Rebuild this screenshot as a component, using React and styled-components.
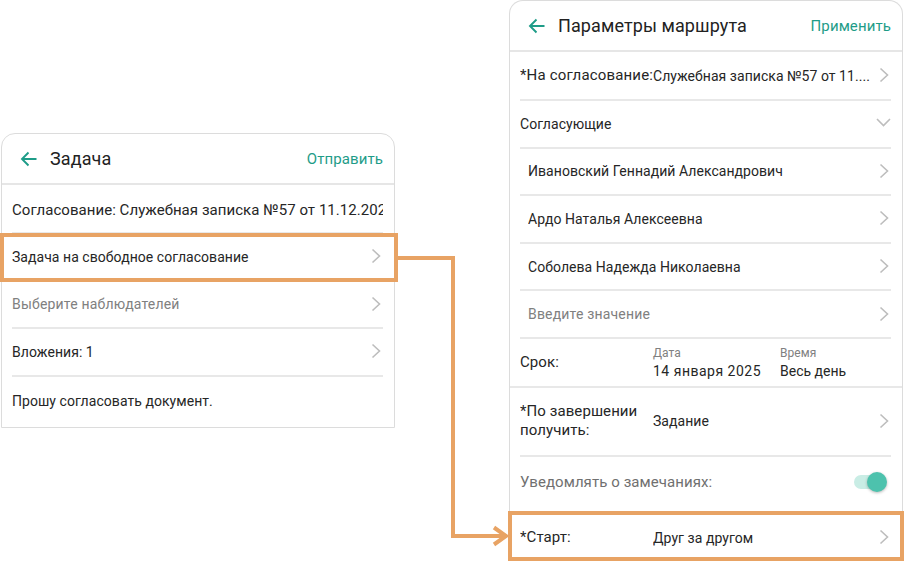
import React from "react";
import styled, { createGlobalStyle } from "styled-components";

const Global = createGlobalStyle`
  html, body { margin: 0; padding: 0; background: #fff; }
  body { font-family: Roboto, "Noto Sans", sans-serif; color: #222; }
  #root { width: 904px; height: 561px; overflow: hidden; }
`;

const Page = styled.div`
  position: relative;
  width: 904px;
  height: 561px;
  overflow: hidden;
  display: flex;
  justify-content: space-between;
  align-items: flex-start;
  padding: 0 1px;
  box-sizing: border-box;
`;

const Phone = styled.section`
  width: 394px;
  height: ${(p) => p.$height}px;
  margin-top: ${(p) => p.$top}px;
  box-sizing: border-box;
  border: 1px solid #dcdcdc;
  border-bottom-width: ${(p) => (p.$open ? 0 : 1)}px;
  border-radius: 14px 14px 0 0;
  background: #fff;
  flex: none;
  overflow: hidden;
  display: flex;
  flex-direction: column;
`;

const Header = styled.header`
  height: 49px;
  flex: none;
  display: flex;
  align-items: center;
  padding: 0 11px 0 18px;
  border-bottom: 2px solid #e6e6e6;
`;

const Back = styled.svg`
  width: 18px;
  height: 18px;
  flex: none;
  margin-right: 12px;
  fill: none;
  stroke: #1e9c88;
  stroke-width: 1.9;
`;

const Title = styled.h1`
  flex: 1;
  margin: 0;
  font-size: 18px;
  font-weight: 400;
  color: #222;
  letter-spacing: 0.1px;
`;

const Action = styled.span`
  font-size: 15px;
  color: #1e9c88;
  letter-spacing: 0.1px;
`;

const Row = styled.div`
  height: ${(p) => p.$h || 47.6}px;
  box-sizing: border-box;
  flex: none;
  margin: 0 11px 0 10px;
  padding-left: ${(p) => (p.$indent ? 8 : 0)}px;
  padding-top: ${(p) => p.$pt || 0}px;
  display: flex;
  align-items: center;
  font-size: ${(p) => p.$size || 14}px;
  letter-spacing: ${(p) => (p.$muted ? 0.18 : 0.05)}px;
  color: ${(p) => (p.$muted ? "#808080" : "#262626")};
  border-bottom: ${(p) => (p.$plain ? 0 : "2px solid #e8e8e8")};
  white-space: nowrap;
  overflow: hidden;
`;

const DateRow = styled(Row)`
  margin: 0;
  padding-left: 10px;
`;

const Label = styled.span`
  flex: 1;
  min-width: 0;
  overflow: hidden;
`;

const FieldName = styled.span`
  width: 133px;
  flex: none;
  white-space: ${(p) => (p.$single ? "nowrap" : "normal")};
  line-height: 19px;
  font-size: 15px;
  letter-spacing: ${(p) => (p.$single ? 0.16 : 0.08)}px;
`;

const Arrow = styled.svg`
  width: ${(p) => p.$w || 14}px;
  height: 18px;
  flex: none;
  margin-top: -1px;
  fill: none;
  stroke: #bdbdbd;
  stroke-width: 1.6;
`;

const DateCell = styled.div`
  width: ${(p) => p.$w}px;
  flex: none;
  display: flex;
  flex-direction: column;
  gap: 2px;
  margin-top: -1px;
  font-size: 14px;
  letter-spacing: ${(p) => p.$ls}px;
`;

const Small = styled.span`
  font-size: 12px;
  line-height: 16px;
  letter-spacing: 0.05px;
  color: #808080;
`;

const Notice = styled(Label)`
  font-size: 15px;
  letter-spacing: 0.07px;
  color: #707070;
`;

const Toggle = styled.span`
  position: relative;
  width: 30px;
  height: 14px;
  flex: none;
  margin-right: 7px;
  border-radius: 7px;
  background: #c9ede5;
  &::after {
    content: "";
    position: absolute;
    right: -3px;
    top: -3px;
    width: 20px;
    height: 20px;
    border-radius: 50%;
    background: #4dc2ad;
    box-shadow: 0 1px 3px rgba(0, 0, 0, 0.28);
  }
`;

const Highlight = styled.div`
  position: absolute;
  box-sizing: border-box;
  left: ${(p) => p.$x}px;
  top: ${(p) => p.$y}px;
  width: ${(p) => p.$w}px;
  height: ${(p) => p.$h}px;
  border: 4px solid #e8a364;
`;

const Connector = styled.svg`
  position: absolute;
  left: 0;
  top: 0;
  width: 904px;
  height: 561px;
  fill: none;
  stroke: #e8a364;
  stroke-width: 4;
`;

const Chevron = () => (
  <Arrow viewBox="0 0 14 18">
    <path d="M3.5 2.5l7 6.5-7 6.5" />
  </Arrow>
);

const Down = () => (
  <Arrow viewBox="0 0 15 18" $w={15}>
    <path d="M1 5l6.5 6.5L14 5" />
  </Arrow>
);

const BackIcon = () => (
  <Back viewBox="0 0 18 18">
    <path d="M16.5 9H2M8.5 2.5L2 9l6.5 6.5" />
  </Back>
);

export default function App() {
  return (
    <Page>
      <Global />
      <Phone $height={295} $top={133}>
        <Header>
          <BackIcon />
          <Title>Задача</Title>
          <Action>Отправить</Action>
        </Header>
        <Row $h={49} $pt={2} $size={15}>
          <Label>Согласование: Служебная записка №57 от 11.12.2024</Label>
        </Row>
        <Row>
          <Label>Задача на свободное согласование</Label>
          <Chevron />
        </Row>
        <Row $muted>
          <Label>Выберите наблюдателей</Label>
          <Chevron />
        </Row>
        <Row>
          <Label>Вложения: 1</Label>
          <Chevron />
        </Row>
        <Row $plain>
          <Label>Прошу согласовать документ.</Label>
        </Row>
      </Phone>

      <Phone $height={561} $top={0} $open>
        <Header>
          <BackIcon />
          <Title>Параметры маршрута</Title>
          <Action>Применить</Action>
        </Header>
        <Row $h={49}>
          <FieldName $single>*На согласование:</FieldName>
          <Label>Служебная записка №57 от 11....</Label>
          <Chevron />
        </Row>
        <Row>
          <Label>Согласующие</Label>
          <Down />
        </Row>
        <Row $indent>
          <Label>Ивановский Геннадий Александрович</Label>
          <Chevron />
        </Row>
        <Row $indent>
          <Label>Ардо Наталья Алексеевна</Label>
          <Chevron />
        </Row>
        <Row $indent>
          <Label>Соболева Надежда Николаевна</Label>
          <Chevron />
        </Row>
        <Row $indent $muted>
          <Label>Введите значение</Label>
          <Chevron />
        </Row>
        <DateRow $h={49}>
          <FieldName>Срок:</FieldName>
          <DateCell $w={127} $ls={0.5}>
            <Small>Дата</Small>
            14 января 2025
          </DateCell>
          <DateCell $w={100} $ls={0}>
            <Small>Время</Small>
            Весь день
          </DateCell>
        </DateRow>
        <Row $h={68.6}>
          <FieldName>*По завершении получить:</FieldName>
          <Label>Задание</Label>
          <Chevron />
        </Row>
        <Row $plain $h={50}>
          <Notice>Уведомлять о замечаниях:</Notice>
          <Toggle />
        </Row>
        <Row $plain $h={62}>
          <FieldName>*Старт:</FieldName>
          <Label>Друг за другом</Label>
          <Chevron />
        </Row>
      </Phone>

      <Highlight $x={0} $y={233} $w={398} $h={49} />
      <Highlight $x={508} $y={511} $w={396} $h={50} />
      <Connector viewBox="0 0 904 561">
        <path d="M398 258H453V536H506" />
        <path d="M494 527.5l12 8.5-12 8.5" />
      </Connector>
    </Page>
  );
}
